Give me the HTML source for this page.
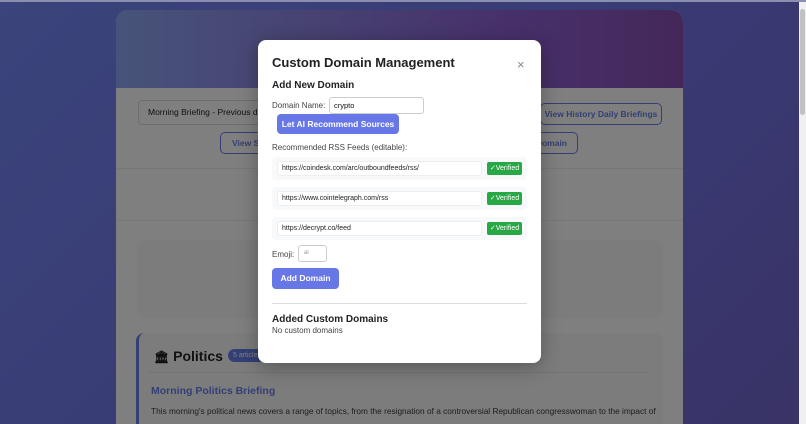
<!DOCTYPE html>
<html style="width:806px;height:424px;overflow:hidden"><head><meta charset="utf-8"><style>
*{box-sizing:border-box;margin:0;padding:0}
body{width:806px;height:424px;overflow:hidden;font-family:"Liberation Sans",sans-serif;background:linear-gradient(135deg,#7688f8 0%,#7274e8 60%,#7266cc 100%);position:relative}
.abs{position:absolute;white-space:nowrap}
.card{left:116px;top:10px;width:567px;height:414px;border-radius:12px 12px 0 0;overflow:hidden;background:#fff}
.hdr{left:0;top:0;width:567px;height:78px;background:linear-gradient(90deg,#8ea8f4,#8e60d4 70%,#8a50b4)}
.ob{border:1.5px solid #667eea;border-radius:5px;color:#667eea;font-weight:bold;font-size:8.5px;display:flex;align-items:center;justify-content:center}
.ov{left:0;top:0;width:806px;height:424px;background:rgba(0,0,0,.5)}
.modal{left:258px;top:40px;width:283px;height:323px;background:#fff;border-radius:8px;box-shadow:0 4px 20px rgba(0,0,0,.3)}
.row{left:14px;width:255px;height:23px;background:#f8f9fa;border-radius:4px}
.inp{left:5px;top:4px;width:205px;height:15px;background:#fff;border:1px solid #eceef0;border-radius:3px;font-size:7px;line-height:13px;padding-left:4px;color:#222}
.ver{left:215px;top:5px;width:35px;height:13px;background:#28a745;color:#fff;font-size:7px;line-height:13px;text-align:center;border-radius:2px}
</style></head><body>
<div class="abs card">
 <div class="abs hdr"></div>
 <div class="abs" style="left:0;top:158px;width:567px;height:1px;background:#eee"></div>
 <div class="abs" style="left:0;top:210px;width:567px;height:1px;background:#eee"></div>
 <div class="abs" style="left:22px;top:90px;width:130px;height:25px;border:1px solid #ddd;border-radius:4px;background:#fff;font-size:8.5px;line-height:23px;padding-left:9px;color:#222;overflow:hidden">Morning Briefing - Previous day 6</div>
 <div class="abs ob" style="left:424px;top:93px;width:122px;height:22px">View History Daily Briefings</div>
 <div class="abs ob" style="left:104px;top:122px;width:50px;height:22px;justify-content:flex-start;padding-left:11px">View S</div>
 <div class="abs ob" style="left:410px;top:122px;width:52px;height:22px;justify-content:flex-end;padding-right:10px">Domain</div>
 <div class="abs" style="left:21px;top:230px;width:526px;height:78px;background:#f8f9fa;border-radius:8px"></div>
 <div class="abs" style="left:20px;top:323px;width:527px;height:100px;background:#f8f9fa;border-radius:8px;border-left:3px solid #667eea"></div>
 <div class="abs" style="left:38px;top:338px;font-size:14px;font-weight:bold;color:#222"><span style="font-size:12px">🏛</span> Politics</div>
 <div class="abs" style="left:112px;top:339px;width:40px;height:13px;background:#667eea;border-radius:7px;font-size:7px;color:#fff;line-height:13px;padding-left:5px;overflow:hidden">5 articles</div>
 <div class="abs" style="left:33px;top:362px;width:500px;height:1px;background:#e6e6e6"></div>
 <div class="abs" style="left:35px;top:375px;font-size:10.5px;font-weight:bold;color:#667eea">Morning Politics Briefing</div>
 <div class="abs" style="left:35px;top:396px;font-size:8.3px;color:#3a3a3a">This morning's political news covers a range of topics, from the resignation of a controversial Republican congresswoman to the impact of</div>
</div>
<div class="abs ov"></div>
<div class="abs modal">
 <div class="abs" style="left:14px;top:15px;font-size:13px;font-weight:bold;color:#222">Custom Domain Management</div>
 <div class="abs" style="left:259px;top:17px;font-size:13px;color:#888">×</div>
 <div class="abs" style="left:14px;top:40px;font-size:10px;font-weight:bold;color:#222">Add New Domain</div>
 <div class="abs" style="left:14px;top:61px;font-size:8px;color:#444">Domain Name:</div>
 <div class="abs" style="left:71px;top:57px;width:95px;height:17px;border:1px solid #ccc;border-radius:3px;font-size:7.5px;line-height:15px;padding-left:4px;color:#111">crypto</div>
 <div class="abs" style="left:19px;top:74px;width:122px;height:20px;background:#6777e6;border-radius:4px;color:#fff;font-size:8.5px;font-weight:bold;line-height:20px;text-align:center">Let AI Recommend Sources</div>
 <div class="abs" style="left:14px;top:103px;font-size:8px;color:#444">Recommended RSS Feeds (editable):</div>
 <div class="abs row" style="top:117px"><div class="abs inp">https://coindesk.com/arc/outboundfeeds/rss/</div><div class="abs ver">✓Verified</div></div>
 <div class="abs row" style="top:147px"><div class="abs inp">https://www.cointelegraph.com/rss</div><div class="abs ver">✓Verified</div></div>
 <div class="abs row" style="top:177px"><div class="abs inp">https://decrypt.co/feed</div><div class="abs ver">✓Verified</div></div>
 <div class="abs" style="left:14px;top:210px;font-size:8px;color:#444">Emoji:</div>
 <div class="abs" style="left:40px;top:205px;width:29px;height:17px;border:1px solid #ccc;border-radius:3px;font-size:6px;line-height:15px;padding-left:5px;color:#999">ai</div>
 <div class="abs" style="left:14px;top:228px;width:67px;height:21px;background:#6777e6;border-radius:4px;color:#fff;font-size:8.5px;font-weight:bold;line-height:21px;text-align:center">Add Domain</div>
 <div class="abs" style="left:14px;top:263px;width:255px;height:1px;background:#ddd"></div>
 <div class="abs" style="left:14px;top:274px;font-size:10px;font-weight:bold;color:#222">Added Custom Domains</div>
 <div class="abs" style="left:14px;top:286px;font-size:8px;color:#444">No custom domains</div>
</div>
<div class="abs" style="left:799px;top:0;width:7px;height:424px;background:#f0f0f0"></div>
<div class="abs" style="left:800px;top:9px;width:5px;height:106px;background:#c1c1c1;border-radius:3px"></div>
<div class="abs" style="left:0;top:0;width:806px;height:2px;background:#8a8fb0"></div>
</body></html>
